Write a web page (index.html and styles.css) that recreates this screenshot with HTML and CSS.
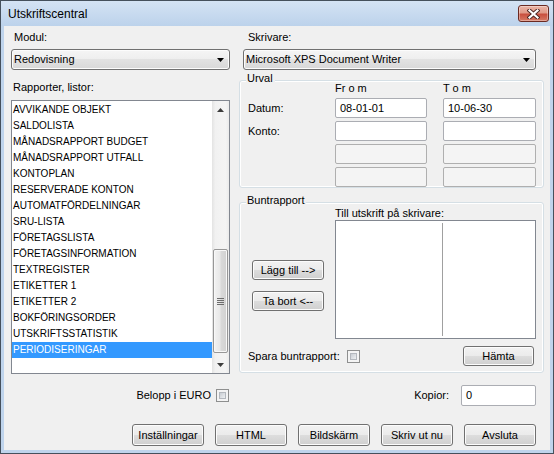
FILE: index.html
```html
<!DOCTYPE html>
<html>
<head>
<meta charset="utf-8">
<title>Utskriftscentral</title>
<link rel="stylesheet" href="styles.css">
</head>
<body>
<div class="window">
  <div class="titlebar">
    <span class="title">Utskriftscentral</span>
    <div class="close">
      <svg width="13" height="10" viewBox="0 0 13 10">
        <path d="M2.5 1.5 L10.5 8.5 M10.5 1.5 L2.5 8.5" stroke="#4a2420" stroke-width="4" stroke-linecap="square" fill="none"/>
        <path d="M2.5 1.5 L10.5 8.5 M10.5 1.5 L2.5 8.5" stroke="#ffffff" stroke-width="2.2" stroke-linecap="square" fill="none"/>
      </svg>
    </div>
  </div>
  <div class="client">
    <div class="main">
      <div class="col-left">
        <div class="label label-modul">Modul:</div>
        <div class="combo">
          <span class="combo-text">Redovisning</span>
          <svg class="combo-arrow" width="7" height="4" viewBox="0 0 7 4"><polygon points="0,0 7,0 3.5,4" fill="#000"/></svg>
        </div>
        <div class="label label-list">Rapporter, listor:</div>
        <div class="listbox">
          <ul class="items">
            <li>AVVIKANDE OBJEKT</li>
            <li>SALDOLISTA</li>
            <li>MÅNADSRAPPORT BUDGET</li>
            <li>MÅNADSRAPPORT UTFALL</li>
            <li>KONTOPLAN</li>
            <li>RESERVERADE KONTON</li>
            <li>AUTOMATFÖRDELNINGAR</li>
            <li>SRU-LISTA</li>
            <li>FÖRETAGSLISTA</li>
            <li>FÖRETAGSINFORMATION</li>
            <li>TEXTREGISTER</li>
            <li>ETIKETTER 1</li>
            <li>ETIKETTER 2</li>
            <li>BOKFÖRINGSORDER</li>
            <li>UTSKRIFTSSTATISTIK</li>
            <li class="selected">PERIODISERINGAR</li>
          </ul>
          <div class="vscroll">
            <div class="sb-btn"><svg width="7" height="4" viewBox="0 0 7 4"><polygon points="0,4 7,4 3.5,0" fill="#3c3c3c"/></svg></div>
            <div class="sb-track">
              <div class="sb-thumb">
                <svg width="7" height="7" viewBox="0 0 7 7"><path d="M0 0.5H7M0 2.5H7M0 4.5H7M0 6.5H7" stroke="#6d6d6d" stroke-width="1"/></svg>
              </div>
            </div>
            <div class="sb-btn"><svg width="7" height="4" viewBox="0 0 7 4"><polygon points="0,0 7,0 3.5,4" fill="#3c3c3c"/></svg></div>
          </div>
        </div>
      </div>
      <div class="col-right">
        <div class="label label-printer">Skrivare:</div>
        <div class="combo combo-printer">
          <span class="combo-text">Microsoft XPS Document Writer</span>
          <svg class="combo-arrow" width="7" height="4" viewBox="0 0 7 4"><polygon points="0,0 7,0 3.5,4" fill="#000"/></svg>
        </div>
        <div class="group urval">
          <div class="legend">Urval</div>
          <div class="urval-grid">
            <span></span><span class="colhead">Fr o m</span><span class="colhead">T o m</span>
            <span class="rowlabel">Datum:</span><div class="textbox">08-01-01</div><div class="textbox">10-06-30</div>
            <span class="rowlabel">Konto:</span><div class="textbox"></div><div class="textbox"></div>
            <span></span><div class="textbox disabled"></div><div class="textbox disabled"></div>
            <span></span><div class="textbox disabled"></div><div class="textbox disabled"></div>
          </div>
        </div>
        <div class="group bunt">
          <div class="legend">Buntrapport</div>
          <div class="bunt-body">
            <div class="bunt-actions">
              <div class="btn btn-small">Lägg till --&gt;</div>
              <div class="btn btn-small">Ta bort &lt;--</div>
            </div>
            <div class="bunt-target">
              <div class="label">Till utskrift på skrivare:</div>
              <div class="listview">
                <div class="lv-col"></div>
                <div class="lv-divider"></div>
                <div class="lv-col lv-col-rest"></div>
              </div>
            </div>
          </div>
          <div class="bunt-footer">
            <span class="label">Spara buntrapport:</span>
            <span class="checkbox"><span class="check-inner"></span></span>
            <div class="btn btn-hamta">Hämta</div>
          </div>
        </div>
      </div>
    </div>
    <div class="options">
      <div class="opt-left">
        <span class="label">Belopp i EURO</span>
        <span class="checkbox"><span class="check-inner"></span></span>
      </div>
      <div class="opt-right">
        <span class="label">Kopior:</span>
        <div class="textbox copies">0</div>
      </div>
    </div>
    <div class="buttons">
      <div class="btn">Inställningar</div>
      <div class="btn">HTML</div>
      <div class="btn">Bildskärm</div>
      <div class="btn">Skriv ut nu</div>
      <div class="btn">Avsluta</div>
    </div>
  </div>
</div>
</body>
</html>
```
FILE: styles.css
```css
* { box-sizing: border-box; }
html, body { margin: 0; padding: 0; }
body {
  font-family: "Liberation Sans", Arial, sans-serif;
  font-size: 11px;
  color: #000;
  background: #ffffff;
}
.window {
  width: 554px;
  height: 454px;
  border: 1px solid #45505c;
  background: #bfd4ec;
  display: flex;
  flex-direction: column;
}
.titlebar {
  height: 25px;
  display: flex;
  justify-content: space-between;
  align-items: flex-start;
  padding: 0 4px 0 7px;
  background: linear-gradient(#d4e3f4, #bcd2eb);
}
.title {
  font-size: 12px;
  line-height: 13px;
  margin-top: 7px;
  color: #000;
}
.close {
  width: 31px;
  height: 17px;
  margin-top: 4px;
  border: 1px solid #6b2a22;
  border-radius: 3px;
  background: linear-gradient(#eab4a6 0%, #e09a88 45%, #c9503f 55%, #d67a64 100%);
  box-shadow: inset 0 0 0 1px rgba(255, 255, 255, 0.35);
  display: flex;
  align-items: center;
  justify-content: center;
}
.client {
  flex: 1;
  margin: 0 3px 3px 3px;
  background: #f0f0f0;
  display: flex;
  flex-direction: column;
  padding: 5px 0 4px 0;
}
.main {
  display: flex;
  height: 343px;
}
.col-left {
  width: 219px;
  margin-left: 7px;
  display: flex;
  flex-direction: column;
}
.col-right {
  width: 305px;
  margin-left: 9px;
  display: flex;
  flex-direction: column;
}
.label {
  line-height: 13px;
  height: 13px;
  white-space: nowrap;
}
.label-modul { padding-left: 3px; }
.label-list { padding-left: 2px; margin-top: 11px; }
.label-printer { padding-left: 9px; }
.combo {
  margin-top: 5px;
  height: 21px;
  border: 1px solid #707070;
  border-radius: 3px;
  background: linear-gradient(#f5f5f5 0%, #eeeeee 50%, #e2e2e2 50%, #d8d8d8 100%);
  box-shadow: inset 0 0 0 1px #fcfcfc;
  display: flex;
  align-items: center;
  justify-content: space-between;
  padding: 0 5px 0 2px;
}
.combo-printer { margin-left: 4px; margin-right: 8px; }
.combo-text { line-height: 13px; }
.listbox {
  margin-top: 6px;
  height: 274px;
  border: 1px solid #828790;
  background: #fff;
  display: flex;
}
.items {
  list-style: none;
  margin: 0;
  padding: 1px 0 0 0;
  flex: 1;
}
.items li {
  height: 16px;
  line-height: 16px;
  font-size: 10px;
  padding-left: 1px;
  white-space: nowrap;
}
.items li.selected {
  background: #3399ff;
  color: #fff;
}
.vscroll {
  width: 17px;
  display: flex;
  flex-direction: column;
  background: linear-gradient(to right, #e3e3e3, #f1f1f1 20%, #f4f4f4 80%, #ebebeb);
}
.sb-btn {
  height: 17px;
  display: flex;
  align-items: center;
  justify-content: center;
}
.sb-track {
  flex: 1;
  padding: 131px 1px 0 1px;
}
.sb-thumb {
  height: 104px;
  border: 1px solid #979797;
  border-radius: 2px;
  background: linear-gradient(to right, #f3f3f3, #e8e8e8 45%, #d9d9d9 55%, #d1d1d1);
  box-shadow: inset 0 0 0 1px #f8f8f8;
  display: flex;
  align-items: center;
  justify-content: center;
}
.group {
  border: 1px solid #d5dfe5;
  border-radius: 3px;
  box-shadow: inset 0 0 0 1px #ffffff;
}
.legend {
  width: max-content;
  height: 13px;
  line-height: 13px;
  padding: 0 2px 0 1px;
  background: #f0f0f0;
  margin: -9px 0 -4px -2px;
}
.urval {
  margin-top: 10px;
  height: 108px;
  padding: 0 7px 0 8px;
}
.urval-grid {
  display: grid;
  grid-template-columns: 71px 92px 93px;
  grid-template-rows: 14px 20px 20px 20px 20px;
  column-gap: 16px;
  row-gap: 3px;
  align-items: center;
}
.colhead { line-height: 13px; }
.rowlabel { line-height: 13px; }
.textbox {
  height: 20px;
  border: 1px solid #abadb3;
  border-radius: 2px;
  background: #fff;
  line-height: 18px;
  padding-left: 4px;
}
.textbox.disabled {
  background: #f4f4f4;
  border-color: #afafaf;
}
.bunt {
  margin-top: 14px;
  height: 171px;
  padding: 0 7px 6px 8px;
  display: flex;
  flex-direction: column;
}
.bunt .legend { margin-bottom: 0; }
.bunt-body {
  display: flex;
  height: 132px;
}
.bunt-actions {
  width: 87px;
  padding: 53px 0 0 4px;
  display: flex;
  flex-direction: column;
  gap: 11px;
}
.bunt-target {
  width: 201px;
}
.listview {
  height: 119px;
  border: 1px solid #828790;
  background: #fff;
  display: flex;
}
.lv-col { width: 106px; }
.lv-col-rest { flex: 1; }
.lv-divider {
  width: 1px;
  margin: 2px 0;
  background: #a0a0a0;
}
.bunt-footer {
  margin-top: 7px;
  height: 20px;
  display: flex;
  align-items: center;
}
.btn {
  height: 22px;
  width: 72px;
  border: 1px solid #707070;
  border-radius: 3px;
  background: linear-gradient(#f2f2f2 0%, #ebebeb 50%, #dddddd 50%, #cfcfcf 100%);
  box-shadow: inset 0 0 0 1px #fcfcfc;
  display: flex;
  align-items: center;
  justify-content: center;
  white-space: nowrap;
}
.btn-small { height: 20px; }
.btn-hamta {
  height: 20px;
  width: 71px;
  margin-left: auto;
  margin-right: 2px;
}
.checkbox {
  width: 13px;
  height: 13px;
  border: 1px solid #8e8f8f;
  background: #f4f4f4;
  padding: 2px;
  display: inline-flex;
  margin-left: 7px;
}
.check-inner {
  flex: 1;
  border: 1px solid #b4b8be;
  background: linear-gradient(135deg, #c9cdd3, #eef0f2);
}
.options {
  margin-top: 11px;
  height: 21px;
  display: flex;
}
.opt-left {
  width: 219px;
  margin-left: 7px;
  display: flex;
  justify-content: flex-end;
  align-items: center;
}
.opt-left .checkbox { margin-left: 5px; margin-right: 1px; }
.opt-right {
  width: 305px;
  margin-left: 9px;
  padding-right: 8px;
  display: flex;
  justify-content: flex-end;
  align-items: center;
}
.textbox.copies {
  width: 75px;
  height: 21px;
  margin-left: 12px;
  line-height: 19px;
}
.buttons {
  margin-top: 18px;
  display: flex;
  justify-content: flex-end;
  gap: 11px;
  padding-right: 14px;
}
```
